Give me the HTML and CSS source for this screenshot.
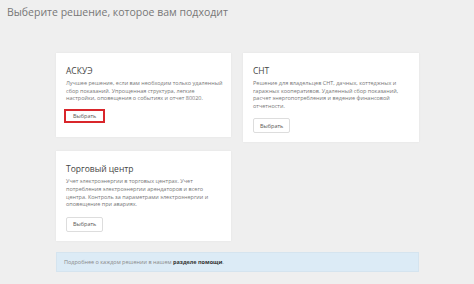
FILE: index.html
```html
<!DOCTYPE html>
<html lang="ru">
<head>
    <meta charset="UTF-8">
    <meta name="viewport" content="width=device-width, initial-scale=1.0">
    <title>Выберите решение</title>
    <link rel="stylesheet" href="styles.css">
</head>
<body>
    <div class="page">
        <h1 class="page-title">Выберите решение, которое вам подходит</h1>

        <!-- Карточки решений -->
        <div class="solutions">
            <div class="card">
                <h2>АСКУЭ</h2>
                <p>Лучшее решение, если вам необходим только удаленный сбор показаний. Упрощенная структура, легкие настройки, оповещения о событиях и отчет 80020.</p>
                <button class="btn btn-marked">Выбрать</button>
            </div>
            <div class="card">
                <h2>СНТ</h2>
                <p>Решение для владельцев СНТ, дачных, коттеджных и гаражных кооперативов. Удаленный сбор показаний, расчет энергопотребления и ведение финансовой отчетности.</p>
                <button class="btn">Выбрать</button>
            </div>
            <div class="card">
                <h2>Торговый центр</h2>
                <p>Учет электроэнергии в торговых центрах. Учет потребления электроэнергии арендаторов и всего<br>центра. Контроль за параметрами электроэнергии и оповещение при авариях.</p>
                <button class="btn">Выбрать</button>
            </div>
        </div>

        <div class="info">
            Подробнее о каждом решении в нашем <strong>разделе помощи</strong>.
        </div>
    </div>
</body>
</html>
```

FILE: styles.css
```css
body {
    margin: 0;
    background-color: #efefef;
    font-family: "Open Sans", Arial, sans-serif;
    color: #555;
}
.page {
    padding: 4px 0 0 7px;
}
.page-title {
    margin: 0 0 32px 0;
    font-size: 10.5px;
    font-weight: 400;
    line-height: 17px;
    color: #777;
}
.solutions {
    display: grid;
    grid-template-columns: 175px 176px;
    column-gap: 12px;
    row-gap: 9px;
    align-items: start;
    margin-left: 49px;
    width: 363px;
}
.card {
    background-color: white;
    box-shadow: 0 0 2px rgba(0, 0, 0, 0.06);
    padding: 12px 6px 9px 10px;
}
.card h2 {
    margin: 0 0 3px 0;
    font-size: 8.5px;
    font-weight: 400;
    line-height: 12px;
    color: #444;
}
.card p {
    margin: 0 0 8px 0;
    font-size: 5.5px;
    line-height: 7.6px;
    color: #777;
}
.btn {
    display: block;
    font-family: "Open Sans", Arial, sans-serif;
    font-size: 5.5px;
    color: #555;
    background-color: white;
    border: 1px solid #ddd;
    border-radius: 2px;
    height: 15px;
    padding: 0 6px;
    cursor: pointer;
}
.btn-marked {
    border: 2px solid #d9262b;
    border-radius: 0;
    height: 14px;
    margin: -2px 0 5px -2px;
    padding: 0 7px;
}
.info {
    margin: 11px 0 0 49px;
    width: 363px;
    box-sizing: border-box;
    padding: 0 7px;
    height: 20px;
    line-height: 18px;
    background-color: #dcebf6;
    border: 1px solid #d5e4ef;
    font-size: 5.5px;
    color: #888;
}
.info strong {
    color: #333;
}
```
